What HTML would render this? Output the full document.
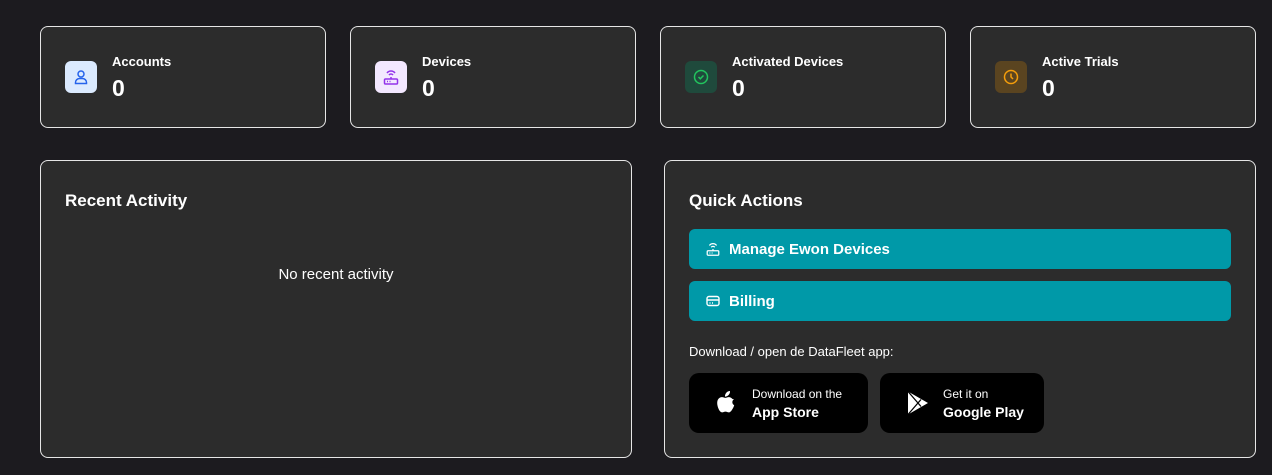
<!DOCTYPE html><html><head><style>
*{box-sizing:border-box;margin:0;padding:0}
body{width:1272px;height:475px;background:#1c1b1f;font-family:"Liberation Sans",sans-serif;color:#fff;position:relative;overflow:hidden}
.card{position:absolute;background:#2c2c2c;border:1px solid #e6e6e6;border-radius:8px}
.top{top:26px;width:286px;height:102px}
.ib{position:absolute;left:24px;top:34px;width:32px;height:32px;border-radius:6px;display:flex;align-items:center;justify-content:center}
.lb{position:absolute;left:71px;top:27px;font-size:13px;font-weight:bold}
.num{position:absolute;left:71px;top:48px;font-size:23px;font-weight:bold}
h2{position:absolute;left:24px;top:30px;font-size:17px;font-weight:bold}
.btn{position:absolute;left:24px;width:542px;height:40px;background:#0099a8;border-radius:6px;font-size:15px;font-weight:bold;display:flex;align-items:center;padding-left:16px}
.btn svg{margin-right:8px}
.st{position:absolute;top:212px;height:60px;background:#000;border-radius:10px}
.st .s{position:absolute;left:63px;top:14px;font-size:12px}
.st .b{position:absolute;left:63px;top:31px;font-size:14px;font-weight:bold}
</style></head><body>
<div class="card top" style="left:40px"><div class="ib" style="background:#dbeafe"><svg width="16" height="16" viewBox="0 0 16 16" fill="none" stroke="#2563eb" stroke-width="1.5"><circle cx="8" cy="5" r="3"/><path d="M2.5 14.5v-1a4 4 0 0 1 4-4h3a4 4 0 0 1 4 4v1z"/></svg></div><div class="lb">Accounts</div><div class="num">0</div></div>
<div class="card top" style="left:350px"><div class="ib" style="background:#f3e8ff"><svg width="18" height="18" viewBox="0 0 18 18" fill="none" stroke="#9333ea" stroke-width="1.5"><path d="M5 5a5 5 0 0 1 8 0M7 7a2.5 2.5 0 0 1 4 0M9 9v2"/><rect x="2.5" y="11" width="13" height="5" rx="1"/><path d="M5 13.5h1M7.5 13.5h1"/></svg></div><div class="lb">Devices</div><div class="num">0</div></div>
<div class="card top" style="left:660px"><div class="ib" style="background:#1f4a3c"><svg width="18" height="18" viewBox="0 0 18 18" fill="none" stroke="#22c55e" stroke-width="1.5"><circle cx="9" cy="9" r="6.5"/><path d="M6.5 9l1.8 1.8L11.5 7.5"/></svg></div><div class="lb">Activated Devices</div><div class="num">0</div></div>
<div class="card top" style="left:970px"><div class="ib" style="background:#5a4420"><svg width="18" height="18" viewBox="0 0 18 18" fill="none" stroke="#f59e0b" stroke-width="1.5"><circle cx="9" cy="9" r="6.5"/><path d="M9 5.5V9l2 2"/></svg></div><div class="lb">Active Trials</div><div class="num">0</div></div>
<div class="card" style="left:40px;top:160px;width:592px;height:298px"><h2>Recent Activity</h2><div style="position:absolute;top:105px;width:100%;text-align:center;font-size:15px">No recent activity</div></div>
<div class="card" style="left:664px;top:160px;width:592px;height:298px"><h2>Quick Actions</h2>
<div class="btn" style="top:68px"><svg width="16" height="16" viewBox="0 0 18 18" fill="none" stroke="#fff" stroke-width="1.4"><path d="M5 5a5 5 0 0 1 8 0M7 7a2.5 2.5 0 0 1 4 0M9 9v2"/><rect x="2.5" y="11" width="13" height="5" rx="1"/><path d="M5 13.5h1M7.5 13.5h1"/></svg>Manage Ewon Devices</div>
<div class="btn" style="top:120px"><svg width="16" height="16" viewBox="0 0 16 16" fill="none" stroke="#fff" stroke-width="1.4"><rect x="2" y="3.5" width="12" height="9" rx="2"/><path d="M2 7h12M4.5 10h1M7 10h1"/></svg>Billing</div>
<div style="position:absolute;left:24px;top:183px;font-size:13px">Download / open de DataFleet app:</div>
<div class="st" style="left:24px;width:179px"><svg style="position:absolute;left:26px;top:18px" width="22" height="24" viewBox="0 0 22 24" fill="#fff"><path d="M15 0c.2 1.6-.5 3-1.4 4-1 1-2.3 1.7-3.6 1.6-.2-1.5.5-3 1.4-4C12.4.6 13.8 0 15 0zM19 8.3c-2.2 1.3-2.3 4.6.2 6-.5 1.6-1.3 3.3-2.4 4.8-.8 1.1-1.7 2.3-3 2.3-1.4 0-1.8-.8-3.3-.8-1.6 0-2 .8-3.3.8-1.3.1-2.3-1.3-3.1-2.4C2.4 15.6 1.4 11.3 3 8.5c.9-1.5 2.4-2.4 4-2.4 1.4 0 2.3.8 3.4.8 1.1 0 1.8-.8 3.4-.8 1.3 0 2.7.7 3.7 1.9z"/></svg><div class="s">Download on the</div><div class="b">App Store</div></div>
<div class="st" style="left:215px;width:164px"><svg style="position:absolute;left:26px;top:17px" width="24" height="26" viewBox="0 0 24 26"><path d="M2 1.5v23l20-11.5z" fill="#fff"/><path d="M2 1.5l13 15M2 24.5l13-15" stroke="#000" stroke-width="1.3" fill="none"/></svg><div class="s">Get it on</div><div class="b">Google Play</div></div>
</div>
</body></html>
